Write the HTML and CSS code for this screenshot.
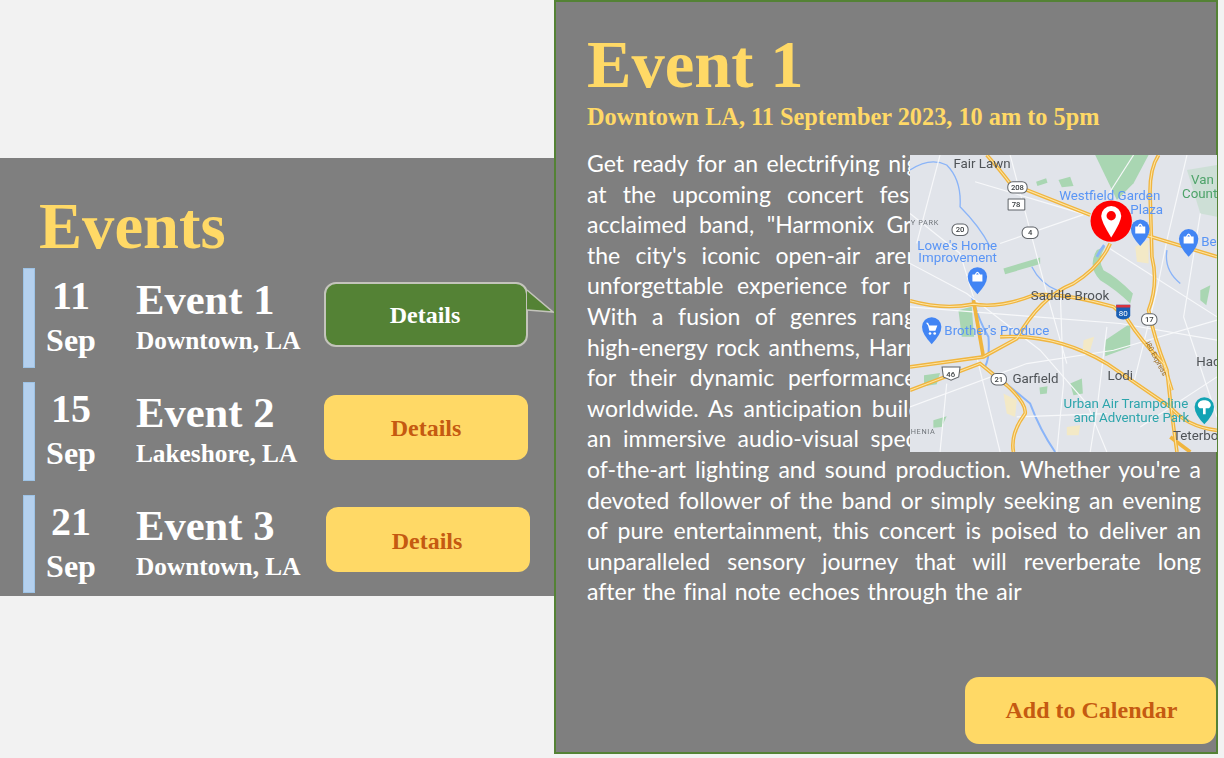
FILE: index.html
```html
<!DOCTYPE html>
<html lang="en">
<head>
<meta charset="utf-8">
<title>Events</title>
<link rel="stylesheet" href="styles.css">
</head>
<body>
<main class="page">
  <section class="events">
    <h1 class="events-title">Events</h1>
    <div class="event-row">
      <div class="bar"></div>
      <div class="date"><div class="day">11</div><div class="month">Sep</div></div>
      <div class="info"><div class="name">Event 1</div><div class="place">Downtown, LA</div></div>
      <div class="details-wrap">
        <button class="details active">Details</button>
        <svg class="tail" width="30" height="28" viewBox="0 0 30 28"><path d="M1 2 L27 24 L1 22" fill="#548235" stroke="#c4c4bc" stroke-width="1.6"/></svg>
      </div>
    </div>
    <div class="event-row">
      <div class="bar bar-mid"></div>
      <div class="date"><div class="day">15</div><div class="month">Sep</div></div>
      <div class="info"><div class="name">Event 2</div><div class="place">Lakeshore, LA</div></div>
      <div class="details-wrap"><button class="details">Details</button></div>
    </div>
    <div class="event-row">
      <div class="bar bar-low"></div>
      <div class="date"><div class="day">21</div><div class="month">Sep</div></div>
      <div class="info"><div class="name">Event 3</div><div class="place">Downtown, LA</div></div>
      <div class="details-wrap shifted"><button class="details">Details</button></div>
    </div>
  </section>

  <section class="detail">
    <h2 class="detail-title">Event 1</h2>
    <p class="detail-sub">Downtown LA, 11 September 2023, 10 am to 5pm</p>
    <div class="copy">
      <div class="line">Get ready for an electrifying night of music and excitement</div>
      <div class="line">at the upcoming concert festival showing the critically</div>
      <div class="line">acclaimed band, "Harmonix Groove," will hit the stage at</div>
      <div class="line">the city's iconic open-air arena, this show promises an</div>
      <div class="line">unforgettable experience for music followers of all ages.</div>
      <div class="line">With a fusion of genres ranging from soulful ballad to</div>
      <div class="line">high-energy rock anthems, Harmonix Groove is known well</div>
      <div class="line">for their dynamic performances that captivate audiences</div>
      <div class="line">worldwide. As anticipation builds, concertgoers can expect</div>
      <div class="line">an immersive audio-visual spectacle, complete with state-</div>
      <div class="line">of-the-art lighting and sound production. Whether you're a</div>
      <div class="line">devoted follower of the band or simply seeking an evening</div>
      <div class="line">of pure entertainment, this concert is poised to deliver an</div>
      <div class="line">unparalleled sensory journey that will reverberate long</div>
      <div class="line last">after the final note echoes through the air</div>
    </div>
    <button class="calendar">Add to Calendar</button>

    <svg class="map" viewBox="30 15 920 890" width="307" height="297" role="img" aria-label="Map">
      <rect x="30" y="15" width="920" height="890" fill="#e1e4ea"/>
      <g fill="#a9d6b2">
        <path d="M585 15 L745 15 L700 100 L650 150 Z"/>
        <path d="M310 355 L420 322 L420 342 L315 372 Z"/>
        <path d="M175 480 L215 470 L222 560 L185 560 Z"/>
        <path d="M615 570 L690 520 L690 590 L615 618 Z"/>
        <path d="M72 675 L120 668 L110 702 L72 708 Z"/>
        <path d="M900 420 L930 405 L918 465 L900 450 Z"/>
        <path d="M475 90 L510 80 L520 108 L485 112 Z"/>
        <path d="M408 95 L438 85 L442 98 L412 108 Z"/>
        <path d="M510 700 L545 685 L548 730 L520 735 Z"/>
        <path d="M860 60 L950 45 L950 200 L900 190 Z" opacity=".35"/>
        <path d="M590 300 Q560 350 600 390 Q650 420 690 460 L698 430 Q650 380 610 360 Q590 330 615 290 Z"/>
        <path d="M100 810 L140 798 L125 830 L100 832 Z"/>
        <path d="M418 712 L442 708 L440 730 L420 732 Z"/>
      </g>
      <g fill="none" stroke="#8ab4f8" stroke-width="4">
        <path d="M30 60 Q90 20 140 45 Q185 90 180 170 Q240 230 270 290"/>
        <path d="M215 440 Q240 520 265 560 Q270 620 255 650 Q320 700 390 760 Q420 840 465 905" stroke-width="6"/>
        <path d="M590 320 Q600 300 612 285" stroke-width="8"/>
        <path d="M395 350 Q420 400 470 420"/>
        <path d="M800 300 Q790 360 840 400"/>
      </g>
      <g fill="none" stroke="#f7f8fa" stroke-width="3.5">
        <path d="M30 340 L200 430 L420 600 L560 760 L620 905"/>
        <path d="M225 95 L560 195"/>
        <path d="M300 280 L560 190"/>
        <path d="M480 420 L490 700 L470 905"/>
        <path d="M330 15 L440 430 L500 640"/>
        <path d="M30 470 L660 520 L950 570"/>
        <path d="M620 530 L590 780 L570 905"/>
        <path d="M30 190 L180 310 L220 440"/>
        <path d="M860 15 L800 270 L770 420 L700 700"/>
        <path d="M620 290 L950 500"/>
        <path d="M950 680 L720 830"/>
        <path d="M120 15 L50 280"/>
        <path d="M30 770 L380 640 L640 600 L950 510"/>
        <path d="M140 700 L120 905"/>
        <path d="M230 620 L300 905"/>
        <path d="M900 190 L850 500 L950 800"/>
        <path d="M700 15 L620 140"/>
        <path d="M350 800 L620 790"/>
      </g>
      <g fill="none" stroke="#f0b53f" stroke-width="11">
        <path d="M260 15 Q300 60 330 100 L570 195 M720 250 L950 320"/>
        <path d="M775 15 Q745 60 750 150 L755 320 Q775 400 745 480 Q760 560 800 660 Q815 800 830 905"/>
        <path d="M30 452 Q130 480 220 462 Q300 475 400 435 Q480 425 640 470 L680 505 Q720 570 790 640 L815 720"/>
        <path d="M630 280 Q600 350 520 400 Q420 440 350 565 L250 620 L30 650"/>
        <path d="M30 720 L240 640 L320 705 Q380 760 375 790 Q330 850 340 905"/>
        <path d="M220 450 L250 620"/>
        <path d="M300 560 Q470 550 620 640 L810 770 Q860 830 950 840"/>
        <path d="M810 860 L870 905"/>
      </g>
      <g fill="none" stroke="#fde6a8" stroke-width="3">
        <path d="M260 15 Q300 60 330 100 L570 195 M720 250 L950 320"/>
        <path d="M775 15 Q745 60 750 150 L755 320 Q775 400 745 480 Q760 560 800 660 Q815 800 830 905"/>
        <path d="M30 452 Q130 480 220 462 Q300 475 400 435 Q480 425 640 470 L680 505 Q720 570 790 640 L815 720"/>
        <path d="M630 280 Q600 350 520 400 Q420 440 350 565 L250 620 L30 650"/>
        <path d="M30 720 L240 640 L320 705 Q380 760 375 790 Q330 850 340 905"/>
        <path d="M300 560 Q470 550 620 640 L810 770 Q860 830 950 840"/>
      </g>
      <g fill="#f3e9c6">
        <path d="M705 290 L745 270 L745 340 L710 335 Z"/>
        <path d="M550 570 L582 560 L570 600 L548 600 Z"/>
        <path d="M500 830 L540 825 L535 855 L500 855 Z"/>
        <path d="M310 730 L350 750 L345 800 L320 790 Z"/>
      </g>
      <g class="shields">
        <rect x="323" y="95" width="58" height="34" rx="15"/>
        <rect x="324" y="147" width="50" height="33" rx="1"/>
        <rect x="156" y="222" width="48" height="34" rx="15"/>
        <rect x="366" y="231" width="48" height="34" rx="15"/>
        <rect x="724" y="491" width="46" height="34" rx="15"/>
        <path d="M126 650 H180 L176 680 L153 690 L130 680 Z"/>
        <rect x="273" y="670" width="46" height="34" rx="15"/>
      </g>
      <g class="shield-text">
        <text x="352" y="121">208</text>
        <text x="348" y="172">78</text>
        <text x="180" y="247">20</text>
        <text x="390" y="256">4</text>
        <text x="747" y="516">17</text>
        <text x="152" y="680">46</text>
        <text x="296" y="695">21</text>
      </g>
      <path d="M648 464 H690 V495 Q690 505 669 508 Q648 505 648 495 Z" fill="#1a5fb4"/>
      <rect x="648" y="464" width="42" height="8" fill="#d9333f"/>
      <text class="i80" x="669" y="497">80</text>

      <g class="label-dark">
        <text x="160" y="53">Fair Lawn</text>
        <text x="392" y="451">Saddle Brook</text>
        <text x="337" y="698">Garfield</text>
        <text x="622" y="689">Lodi</text>
        <text x="888" y="648">Had</text>
        <text x="818" y="868">Teterbo</text>
      </g>
      <g class="label-small">
        <text x="32" y="224">Y PARK</text>
        <text x="32" y="851">HENIA</text>
      </g>
      <text class="label-road" transform="translate(735 578) rotate(62)">I80 Express</text>
      <g class="label-blue">
        <text x="477" y="149">Westfield Garden</text>
        <text x="690" y="192">Plaza</text>
        <text x="903" y="289">Be</text>
        <text x="52" y="299">Lowe's Home</text>
        <text x="55" y="337">Improvement</text>
        <text x="133" y="554">Brother's Produce</text>
      </g>
      <g class="label-green">
        <text x="872" y="102">Van</text>
        <text x="845" y="145">Count</text>
      </g>
      <g class="label-teal">
        <text x="490" y="773">Urban Air Trampoline</text>
        <text x="520" y="816">and Adventure Park</text>
      </g>
      <g fill="#4285f4">
        <path d="M720 288 Q692 258 692 236 A28 28 0 1 1 748 236 Q748 258 720 288 Z"/>
        <path d="M865 320 Q836 290 836 266 A29 29 0 1 1 894 266 Q894 290 865 320 Z"/>
        <path d="M232 432 Q203 402 203 380 A29 29 0 1 1 261 380 Q261 402 232 432 Z"/>
        <path d="M95 582 Q66 552 66 530 A29 29 0 1 1 124 530 Q124 552 95 582 Z"/>
      </g>
      <path d="M912 822 Q883 792 883 770 A29 29 0 1 1 941 770 Q941 792 912 822 Z" fill="#12a3b4"/>
      <g fill="#fff">
        <path d="M705 229 H735 V250 H705 Z M712 229 Q720 212 728 229 H724 Q720 220 716 229 Z"/>
        <path d="M850 259 H880 V280 H850 Z M857 259 Q865 242 873 259 H869 Q865 250 861 259 Z"/>
        <path d="M217 373 H247 V394 H217 Z M224 373 Q232 356 240 373 H236 Q232 364 228 373 Z"/>
        <path d="M78 518 H84 L88 526 H112 L106 542 H88 L84 526 Z"/>
        <circle cx="90" cy="550" r="4"/><circle cx="104" cy="550" r="4"/>
        <path d="M912 750 A16 14 0 0 1 926 774 H916 V792 H908 V774 H898 A16 14 0 0 1 912 750 Z"/>
      </g>
      <g class="pin">
        <circle cx="633" cy="213" r="62" fill="#ff0000"/>
        <path d="M633 262 Q603 215 603 198 A30 30 0 1 1 663 198 Q663 215 633 262 Z" fill="#fff"/>
        <circle cx="633" cy="197" r="14" fill="#ff0000"/>
      </g>
    </svg>
  </section>
</main>
</body>
</html>
```
FILE: styles.css
```css
* { box-sizing: border-box; }
html, body { margin: 0; padding: 0; }
body {
  width: 1224px;
  height: 758px;
  background: #f2f2f2;
  overflow: hidden;
  font-family: "Liberation Serif", serif;
  font-weight: 700;
}
.page {
  display: flex;
  align-items: center;
  height: 754px;
}
.events {
  width: 554px;
  height: 438px;
  background: #7f7f7f;
  padding: 34px 0 0 23px;
  flex: none;
}
.events-title {
  margin: 0 0 8px 16px;
  font-size: 64.6px;
  line-height: 68px;
  color: #ffd966;
}
.event-row {
  display: flex;
  height: 100px;
  margin-bottom: 13px;
}
.bar {
  width: 12px;
  background: #b4d0ee;
  border: 1px solid #9dc3e6;
  flex: none;
}
.bar-mid { margin-top: 1px; height: 99px; }
.bar-low { margin-top: 1px; height: 98px; }
.date {
  width: 74px;
  margin-left: -1px;
  text-align: center;
  color: #fff;
  flex: none;
}
.day { font-size: 40px; line-height: 50px; margin-top: 3px; }
.month { font-size: 32px; line-height: 38px; }
.info {
  width: 188px;
  margin-left: 28px;
  color: #fff;
  flex: none;
}
.name { font-size: 42.6px; line-height: 48px; margin-top: 8px; }
.place { font-size: 25.3px; line-height: 32px; }
.details-wrap {
  position: relative;
  margin-top: 14px;
}
.shifted { margin-left: 2px; margin-top: 13px; }
.details {
  display: block;
  width: 204px;
  height: 65px;
  border: none;
  border-radius: 12px;
  background: #ffd966;
  color: #c55a11;
  font: 700 24px "Liberation Serif", serif;
  padding: 2px 0 0;
}
.shifted .details { padding: 4px 2px 0 0; }
.details.active {
  background: #548235;
  color: #fff;
  border: 2px solid #c4c4bc;
  padding: 2px 2px 0 0;
}
.tail {
  position: absolute;
  left: 202px;
  top: 6px;
}
.detail {
  position: relative;
  width: 664px;
  height: 754px;
  background: #7f7f7f;
  border: 2px solid #548235;
  padding: 27px 15px 8px 31px;
  display: flex;
  flex-direction: column;
  flex: none;
}
.detail-title {
  margin: 0;
  font-size: 66.6px;
  line-height: 72px;
  color: #ffd966;
}
.detail-sub {
  margin: 1px 0 0;
  font-size: 24.3px;
  line-height: 30px;
  color: #ffd966;
}
.copy {
  margin-top: 16px;
  font-family: Lato, sans-serif;
  font-weight: 400;
  font-size: 23px;
  word-spacing: 2px;
  font-variant-ligatures: none;
  line-height: 30.6px;
  color: #fff;
}
.line {
  text-align: justify;
  text-align-last: justify;
  white-space: nowrap;
}
.line.last { text-align-last: left; }
.calendar {
  margin-top: auto;
  margin-right: -15px;
  align-self: flex-end;
  width: 251px;
  height: 67px;
  border: none;
  border-radius: 14px;
  background: #ffd966;
  color: #c55a11;
  font: 700 24px "Liberation Serif", serif;
  padding: 0 0 0 2px;
}
.map {
  position: absolute;
  left: 354px;
  top: 153px;
  display: block;
  filter: blur(0.35px);
}
.shields rect, .shields path { fill: #fff; stroke: #5f6368; stroke-width: 3; }
.map text { font-family: Roboto, sans-serif; font-weight: 400; }
.shield-text text { font-size: 23px; fill: #3c4043; text-anchor: middle; font-weight: 500; }
.i80 { font-size: 24px; fill: #fff; text-anchor: middle; }
.label-dark text { font-size: 40px; fill: #4f5357; }
.label-small text { font-size: 22px; fill: #70757a; letter-spacing: 2px; }
.label-road { font-size: 22px; fill: #9a6a20; }
.label-blue text { font-size: 40px; fill: #5a95f5; }
.label-green text { font-size: 40px; fill: #4ea36a; }
.label-teal text { font-size: 40px; fill: #2da5ac; }
```
